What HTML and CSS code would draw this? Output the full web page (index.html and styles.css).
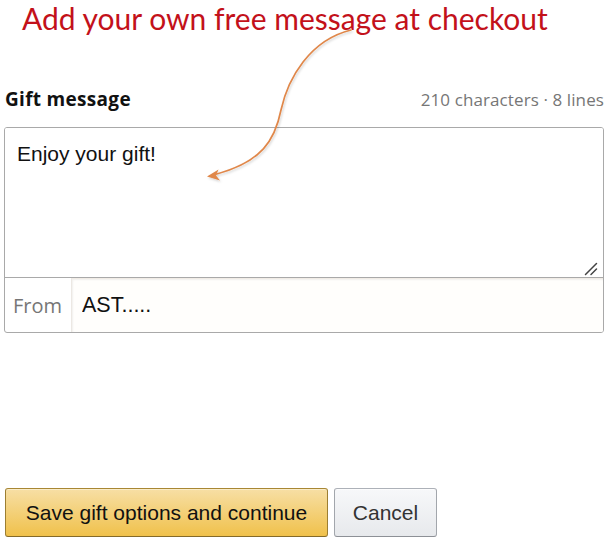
FILE: index.html
```html
<!DOCTYPE html>
<html lang="en">
<head>
<meta charset="utf-8">
<title>Gift message</title>
<link rel="stylesheet" href="styles.css">
</head>
<body>
<div class="page">
  <h1 class="callout">Add your own free message at checkout</h1>
  <section class="gift">
    <div class="gift-head">
      <span class="gift-title">Gift message</span>
      <span class="gift-count">210 characters · 8 lines</span>
    </div>
    <div class="gift-box">
      <textarea class="gift-text">Enjoy your gift!</textarea>
      <div class="from-row">
        <label class="from-label" for="from">From</label>
        <input class="from-input" id="from" type="text" value="AST.....">
      </div>
      <svg class="grip" width="14" height="14" viewBox="0 0 14 14" aria-hidden="true">
        <path d="M1.5,12.5 L12.5,1.5 M7,12.5 L12.5,7" stroke="#444" stroke-width="1.5" stroke-linecap="round"/>
      </svg>
    </div>
  </section>
  <div class="actions">
    <button class="btn btn-primary" type="button">Save gift options and continue</button>
    <button class="btn btn-secondary" type="button">Cancel</button>
  </div>
  <svg class="arrow" width="609" height="542" viewBox="0 0 609 542" aria-hidden="true">
    <defs>
      <filter id="sh" x="-20%" y="-20%" width="140%" height="140%">
        <feDropShadow dx="1" dy="1.5" stdDeviation="1" flood-color="#000" flood-opacity="0.18"/>
      </filter>
    </defs>
    <g filter="url(#sh)">
      <path d="M351,30 C310,40 288,78 281,110 C275,140 262,162 215,174.5" fill="none" stroke="#e0874a" stroke-width="1.7" stroke-linecap="round"/>
      <polygon points="207,176.5 218.5,169.5 216,175.5 220,180.5" fill="#e0874a"/>
    </g>
  </svg>
</div>
</body>
</html>
```

FILE: styles.css
```css
* { box-sizing: border-box; }

html, body {
  margin: 0;
  padding: 0;
  background: #fff;
}

.page {
  position: relative;
  width: 609px;
  height: 542px;
  overflow: hidden;
  font-family: "Liberation Sans", Arial, sans-serif;
}

.callout {
  margin: 0;
  padding: 0 0 0 22px;
  font-family: Lato, "Open Sans", sans-serif;
  font-weight: 400;
  font-size: 30px;
  line-height: 36px;
  color: #c3111a;
}

.gift {
  margin-top: 50px;
  padding: 0 5px 0 4px;
}

.gift-head {
  display: flex;
  justify-content: space-between;
  align-items: baseline;
  padding: 0 0 0 1px;
  height: 26px;
}

.gift-title {
  font-family: "Open Sans", sans-serif;
  font-weight: 700;
  font-size: 19px;
  letter-spacing: 0.3px;
  color: #111;
}

.gift-count {
  font-family: "Open Sans", sans-serif;
  font-size: 17px;
  letter-spacing: 0.1px;
  color: #767676;
}

.gift-box {
  position: relative;
  margin-top: 15px;
  border: 1px solid #a9a9a9;
  border-radius: 3px;
  overflow: hidden;
  display: flex;
  flex-direction: column;
}

.gift-text {
  display: block;
  width: 100%;
  height: 150px;
  margin: 0;
  padding: 14px 12px;
  border: none;
  border-bottom: 1px solid #a9a9a9;
  outline: none;
  resize: none;
  font-family: "Liberation Sans", Arial, sans-serif;
  font-size: 21px;
  color: #111;
  background: #fff;
}

.grip {
  position: absolute;
  right: 5px;
  top: 134px;
}

.from-row {
  display: flex;
  align-items: stretch;
  height: 54px;
}

.from-label {
  width: 66px;
  padding-left: 8px;
  display: flex;
  align-items: center;
  font-family: "Open Sans", sans-serif;
  font-size: 20px;
  color: #767676;
}

.from-input {
  flex: 1;
  min-width: 0;
  margin: 0;
  padding: 0 10px;
  border: none;
  border-left: 1px solid #ece8e3;
  border-top: 1px solid #f1ece6;
  outline: none;
  font-family: "Liberation Sans", Arial, sans-serif;
  font-size: 21.5px;
  color: #111;
  background: #fffefc;
  box-shadow: inset 1px 1px 2px rgba(0, 0, 0, 0.06);
}

.actions {
  display: flex;
  gap: 6px;
  margin-top: 155px;
  padding-left: 5px;
}

.btn {
  height: 49px;
  margin: 0;
  padding: 0;
  border-radius: 3px;
  border: 1px solid;
  font-family: "Liberation Sans", Arial, sans-serif;
  font-size: 21px;
  color: #111;
  cursor: pointer;
}

.btn-primary {
  width: 323px;
  background: linear-gradient(to bottom, #f7dfa5, #f0c14b);
  border-color: #a88734 #9c7e31 #846a29;
  box-shadow: inset 0 1px 0 rgba(255, 255, 255, 0.4);
}

.btn-secondary {
  width: 103px;
  background: linear-gradient(to bottom, #f7f8fa, #e7e9ec);
  border-color: #adb1b8 #a2a6ac #8d9096;
  color: #333;
  box-shadow: inset 0 1px 0 rgba(255, 255, 255, 0.6);
}

.arrow {
  position: absolute;
  left: 0;
  top: 0;
  pointer-events: none;
}
```
